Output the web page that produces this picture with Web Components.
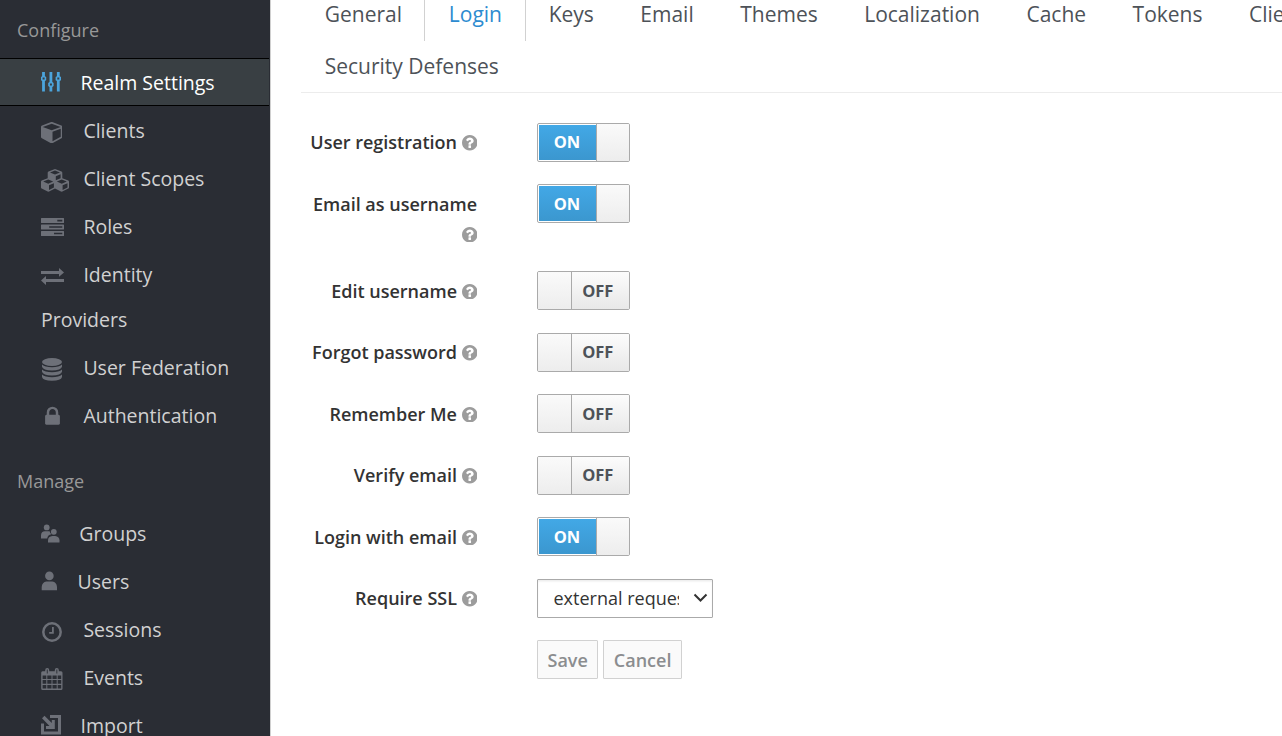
<!DOCTYPE html>
<html lang="en">
<head>
<meta charset="utf-8">
<title>Realm Settings</title>
<style>
html,body{margin:0;height:100%;overflow:hidden;background:#fff;font-family:"Open Sans",sans-serif}
</style>
</head>
<body>
<admin-console></admin-console>
<script>
const define = (name, render) => customElements.define(name, class extends HTMLElement {
  connectedCallback() {
    if (this.shadowRoot) return;
    this.attachShadow({ mode: 'open' }).innerHTML = render(this);
  }
});

// Sidebar glyphs: [width, height, top offset, viewBox, markup]
const ICONS = {
  sliders: [20, 20, -1, '0 0 20 20', '<path d="M1.100 0h2.800v4.200l1.300.8v3.200l-1.300.8V19.500H1.100V9L0 8.200V5l1.100-.8zM8.500 0h2.800v10l1.300.9v3.200l-1.300.8v4.600H8.500v-4.600l-1.300-.8v-3.200l1.300-.9zM15.900 0h2.800v4.200l1.300.8v3.200l-1.300.8v10.500h-2.800V9l-1.300-.8V5l1.300-.8z"/><path fill="#393f43" d="M1.600 5.600h2v2h-2zM8.900 11.500h2v2h-2zM16.300 5.600h2v2h-2z"/>'],
  cube: [21.4, 21.4, 2, '0 128 1664 1664', '<path d="M896 1629l640-349v-636l-640 233v752zm-64-865l698-254-698-254-698 254zm832-252v768q0 35-18 65t-49 47l-704 384q-28 16-61 16t-61-16l-704-384q-31-17-49-47t-18-65v-768q0-40 23-73t61-47l704-256q22-8 44-8t44 8l704 256q38 14 61 47t23 73z"/>'],
  cubes: [28, 23, 1.5, '0 0 28 23', '<path fill-rule="evenodd" d="M14 0l6.5 2.6q.8.4.8 1.2v5.4l6 2.4q.7.4.7 1.2v5.6q0 .8-.7 1.2l-6 3q-.7.3-1.3 0l-6-3-6 3q-.6.3-1.3 0l-6-3Q0 19.200 0 18.400v-5.600q0-.8.7-1.200l6-2.400V3.800q0-.8.8-1.200zM14 1.600L9 3.600l5 2 5-2zM14.800 7.200v4l4.800-2V5.200zM7.200 10.600l-5 2 5 2.100 5-2.100zM8 16.300v4.600l4.900-2.400v-4.200zM20.800 10.600l-5 2 5 2.100 5-2.100zM21.600 16.300v4.600l4.900-2.400v-4.200z"/>'],
  tasks: [23, 18, .5, '0 0 23 18', '<path fill-rule="evenodd" d="M.5 0h22q.5 0 .5.500v4q0 .5-.5.500H.5Q0 5 0 4.500v-4Q0 0 .5 0zM16.300 1.700v1.700h5V1.700zM.5 6.500h22q.5 0 .5.500v4q0 .5-.5.500H.5Q0 11.500 0 11V7q0-.5.500-.5zM8.200 8.200v1.600h13.100V8.200zM.5 13h22q.5 0 .5.500v4q0 .5-.5.500H.5Q0 18 0 17.500v-4q0-.5.500-.5zM13 14.700v1.600h8.300v-1.600z"/>'],
  exchange: [23, 17, 2, '0 0 23 17', '<path d="M0 3h18V0l5 4.400-5 4.400V6H0zM23 11H5V8L0 12.500 5 17v-3h18z"/>'],
  database: [22, 23, 1.500, '0 0 22 23', '<ellipse cx="11" cy="4" rx="10" ry="4"/><path d="M1 6.600q3 2.700 10 2.700t10-2.700v2.200q-1 3.600-10 3.600T1 8.800zM1 11.600q3 2.700 10 2.700t10-2.700v2.200q-1 3.600-10 3.600T1 13.800zM1 16.600q3 2.700 10 2.700t10-2.700V19q-1 3.800-10 3.800T1 19z"/>'],
  lock: [23, 23, .5, '0 0 1792 1792', '<path d="M640 768h512v-192q0-106-75-181t-181-75-181 75-75 181v192zm832 96v576q0 40-28 68t-68 28h-960q-40 0-68-28t-28-68v-576q0-40 28-68t68-28h32v-192q0-184 132-316t316-132 316 132 132 316v192h32q40 0 68 28t28 68z"/>'],
  groups: [19, 19, 0, '0 0 19 19', '<circle cx="5.700" cy="3.400" r="2.900"/><path d="M0 14.500v-3.200Q.2 7.500 4 7.300h4.600q.5 2 1.800 3-3.600.6-4.200 4.200z"/><circle cx="12.800" cy="7.800" r="2.900"/><path d="M7 18.500v-2.200q.2-4 4.400-4.300h2.800q4 .3 4.300 4.300v2.200z"/>'],
  user: [17, 20, -.5, '0 0 17 20', '<circle cx="8.400" cy="4.900" r="4.300"/><path d="M.7 19.300v-3.400q.4-5 4.700-5.500h6q4.200.5 4.600 5.500v3.400z"/>'],
  clock: [22, 22, 2, '0 0 22 22', '<circle cx="11" cy="11" r="8.700" fill="none" stroke="currentColor" stroke-width="2.500"/><path d="M11 6h1.800v6.700H8.200v-1.700H11z"/>'],
  calendar: [22, 23, 1.500, '0 0 22 23', '<path fill-rule="evenodd" d="M1.500 3.200H4.200V2q0-2 2-2t2 2v1.200h5.600V2q0-2 2-2t2 2v1.200h2.300q1.400 0 1.400 1.500v15.800q0 1.500-1.500 1.500H1.700Q.2 22 .2 20.500V4.700q0-1.500 1.300-1.500zM5.800 1.600v3.800h.9V1.600zM15.400 1.600v3.800h.9V1.600zM1.600 7.400v3.500h3.700V7.400zM6.300 7.400v3.500h4.200V7.400zM11.500 7.400v3.500h4.200V7.400zM16.700 7.400v3.500h3.500V7.400zM1.600 12v3.800h3.700V12zM6.300 12v3.800h4.200V12zM11.500 12v3.800h4.200V12zM16.700 12v3.800h3.500V12zM1.600 16.900v3.700h3.700v-3.700zM6.300 16.900v3.700h4.200v-3.700zM11.500 16.900v3.700h4.200v-3.700zM16.700 16.900v3.700h3.500v-3.700z"/>'],
  import: [20, 20, -1, '0 0 20 20', '<path d="M9 0h11v19.500H0V8.500h3v8h14V3H9zM1 3.300L3.500.8l7.300 7.300V5h3v9H5v-3h3.500z"/>']
};

define('nav-item', el => {
  const [w, h, dy, vb, art] = ICONS[el.getAttribute('icon')];
  return `<style>
  :host{display:block;height:48px;box-sizing:border-box;padding:1px 0 2px 41px;font-size:19.5px;line-height:45px;color:#d1d1d1}
  :host([tall]){height:93px}
  :host([active]){margin:-1px 1px 1px 0;background:#393f43;border:solid #000;border-width:1px 0;color:#fff}
  .row{display:flex;align-items:center;height:45px;white-space:nowrap}
  .icon{flex:none;display:flex;width:${el.getAttribute('gap')}px;color:#6d7078}
  :host([active]) .icon{color:#4ba4dc}
  svg{display:block;margin-top:${dy * 2}px}
  </style><div class="row"><span class="icon"><svg width="${w}" height="${h}" viewBox="${vb}" fill="currentColor">${art}</svg></span><slot></slot></div><slot name="more"></slot>`;
});

define('nav-group', el => `<style>
  :host{display:block}
  h2{margin:0;height:59px;padding:15px 0 0 17px;box-sizing:border-box;font-size:18px;font-weight:400;line-height:30px;color:#989898}
  :host([second]) h2{height:70px;padding-top:26px}
  </style><h2>${el.getAttribute('heading')}</h2><slot></slot>`);

define('side-bar', () => `<style>
  :host{display:block;width:270px;height:736px;overflow:hidden;background:#2a2d34;border-right:1px solid #d0d0d0}
  </style>
  <nav-group heading="Configure">
    <nav-item icon="sliders" gap="39.5" active>Realm Settings</nav-item>
    <nav-item icon="cube" gap="42.4">Clients</nav-item>
    <nav-item icon="cubes" gap="42.4">Client Scopes</nav-item>
    <nav-item icon="tasks" gap="42.4">Roles</nav-item>
    <nav-item icon="exchange" gap="42.4" tall>Identity<span slot="more">Providers</span></nav-item>
    <nav-item icon="database" gap="42.4">User Federation</nav-item>
    <nav-item icon="lock" gap="42.4">Authentication</nav-item>
  </nav-group>
  <nav-group heading="Manage" second>
    <nav-item icon="groups" gap="38.3">Groups</nav-item>
    <nav-item icon="user" gap="36.5">Users</nav-item>
    <nav-item icon="clock" gap="42.4">Sessions</nav-item>
    <nav-item icon="calendar" gap="42.4">Events</nav-item>
    <nav-item icon="import" gap="39.5">Import</nav-item>
  </nav-group>`);

define('tab-item', () => `<style>
  :host{display:block;box-sizing:border-box;padding:0 23.25px;height:52px;line-height:28px;font-size:21px;color:#4d5258;white-space:nowrap}
  :host([first]){padding:0 22.300px 0 23.700px}
  :host([active]){height:41px;padding:0 23.5px;margin-right:-1.100px;border:solid #d1d1d1;border-width:0 1px;color:#2d8bd0}
  </style><slot></slot>`);

define('tab-bar', () => `<style>
  :host{display:block;height:93px;box-sizing:border-box;border-bottom:1px solid #ececec;overflow:hidden}
  .row{display:flex;height:52px}
  </style>
  <div class="row"><tab-item first>General</tab-item><tab-item active>Login</tab-item><tab-item>Keys</tab-item><tab-item>Email</tab-item><tab-item>Themes</tab-item><tab-item>Localization</tab-item><tab-item>Cache</tab-item><tab-item>Tokens</tab-item><tab-item>Client Registration</tab-item></div>
  <div class="row"><tab-item first>Security Defenses</tab-item></div>`);

define('help-icon', () => `<style>:host{display:inline-block;width:15.500px;height:15.500px;margin-left:4.500px;vertical-align:-1.500px;color:#9c9c9c}svg{display:block}</style>
  <svg width="15.500" height="15.500" viewBox="128 128 1536 1536" fill="currentColor"><path d="M1024 1376v-192q0-14-9-23t-23-9h-192q-14 0-23 9t-9 23v192q0 14 9 23t23 9h192q14 0 23-9t9-23zm256-672q0-88-55.5-163t-138.5-116-170-41q-243 0-371 213-15 24 8 42l132 100q7 6 19 6 16 0 25-12 53-68 86-92 34-24 86-24 48 0 85.5 26t37.5 59q0 38-20 61t-68 45q-63 28-115.5 86.5t-52.5 125.5v36q0 14 9 23t23 9h192q14 0 23-9t9-23q0-19 21.5-49.5t54.5-49.5q32-18 49-28.5t46-35 44.5-48 28-60.5 12.5-81zm384 192q0 209-103 385.5t-279.5 279.5-385.5 103-385.5-103-279.5-279.5-103-385.5 103-385.5 279.5-279.5 385.5-103 385.5 103 279.5 279.5 103 385.5z"/></svg>`);

define('form-row', el => `<style>
  :host{display:flex;min-height:39px;margin-bottom:22.5px}
  .label{width:176px;margin-right:60px;padding-top:4.5px;flex:none;text-align:right;font-size:18px;line-height:30px;font-weight:600;color:#333}
  </style><div class="label">${el.getAttribute('label') ? el.getAttribute('label') + (el.hasAttribute('wrap') ? '<br>' : '') + '<help-icon></help-icon>' : ''}</div><slot></slot>`);

define('toggle-switch', el => {
  const on = el.hasAttribute('on');
  return `<style>
  :host{display:flex;width:93px;height:39px;box-sizing:border-box;border:1px solid #aaa;border-radius:2px;background:#fff;overflow:hidden;font-size:16.5px;font-weight:700;line-height:36px;text-align:center}
  .text{flex:1;padding:.5px 5.500px 0 0;color:#4d5258;background:linear-gradient(#fcfcfc,#e8e8e8)}
  .knob{width:33px;background:linear-gradient(#fafafa,#ededed);border-right:1px solid #aaa}
  :host([on]) .text{padding-right:1px;color:#fff;background:linear-gradient(#42a8e6,#3b97cf);margin:1px 0 1px 1px;line-height:34px}
  :host([on]) .knob{width:32px;border-right:0;border-left:1px solid #aaa}
  </style>${on ? '<span class="text">ON</span><span class="knob"></span>' : '<span class="knob"></span><span class="text">OFF</span>'}`;
});

define('select-box', () => `<style>
  :host{display:flex;align-items:center;width:176px;height:39px;box-sizing:border-box;border:1px solid #aaa;border-radius:1px;padding-left:15.500px;font-size:18px;color:#333;box-shadow:inset 0 1.5px 1.500px rgba(0,0,0,.075)}
  .value{width:125.500px;overflow:hidden;white-space:nowrap}
  svg{margin-left:13.500px}
  </style><span class="value"><slot></slot></span><svg width="15" height="10" viewBox="0 0 15 10"><path d="M1.500 1.500l6 6 6-6" fill="none" stroke="#333" stroke-width="2"/></svg>`);

define('push-button', () => `<style>
  :host{display:block;height:39px;box-sizing:border-box;margin-right:5px;padding:1px 9.5px 0;border:1px solid #d1d1d1;border-radius:1px;background:#fafafa;color:#8b8d8f;font-size:18px;font-weight:600;line-height:37px}
  </style><slot></slot>`);

define('settings-page', () => `<style>
  :host{display:block;flex:none;width:981px;margin-left:30px;overflow:hidden}
  form{margin-top:29.6px}
  </style>
  <tab-bar></tab-bar>
  <form>
    <form-row label="User registration"><toggle-switch on></toggle-switch></form-row>
    <form-row label="Email as username" wrap><toggle-switch on></toggle-switch></form-row>
    <form-row label="Edit username"><toggle-switch></toggle-switch></form-row>
    <form-row label="Forgot password"><toggle-switch></toggle-switch></form-row>
    <form-row label="Remember Me"><toggle-switch></toggle-switch></form-row>
    <form-row label="Verify email"><toggle-switch></toggle-switch></form-row>
    <form-row label="Login with email"><toggle-switch on></toggle-switch></form-row>
    <form-row label="Require SSL"><select-box>external requests</select-box></form-row>
    <form-row><push-button>Save</push-button><push-button>Cancel</push-button></form-row>
  </form>`);

define('admin-console', () => `<style>:host{display:flex;width:1282px;height:736px;overflow:hidden}</style><side-bar></side-bar><settings-page></settings-page>`);
</script>
</body>
</html>
